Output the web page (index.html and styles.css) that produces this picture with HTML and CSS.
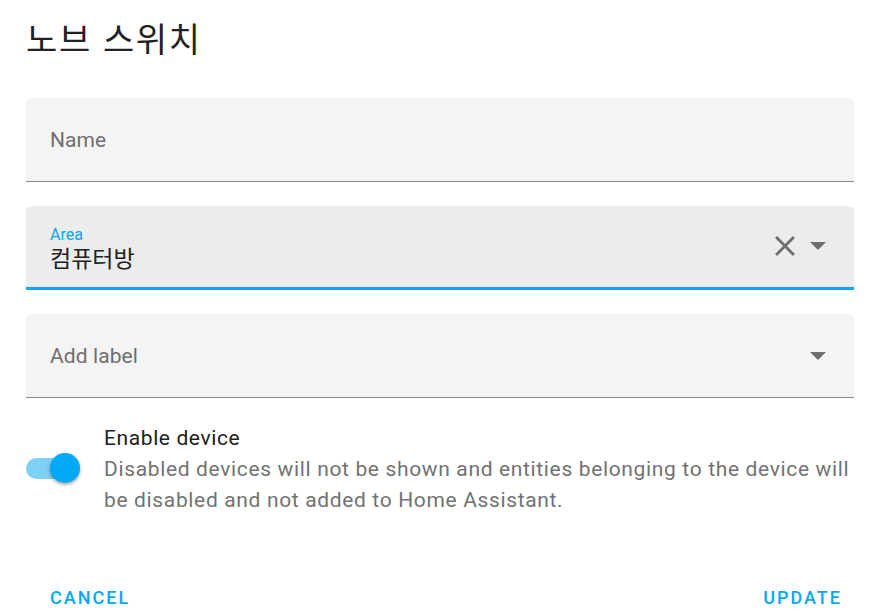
FILE: index.html
```html
<!DOCTYPE html>
<html lang="ko">
<head>
<meta charset="utf-8">
<link rel="stylesheet" href="styles.css">
</head>
<body>
<div class="dialog">
  <h1 class="title">노브 스위치</h1>
  <div class="fields">
    <div class="field">
      <span class="placeholder">Name</span>
    </div>
    <div class="field focused">
      <div class="stack">
        <span class="float-label">Area</span>
        <span class="value">컴퓨터방</span>
      </div>
      <div class="icons">
        <svg class="clear" width="34" height="34" viewBox="0 0 24 24"><path d="M19,6.41L17.59,5L12,10.59L6.41,5L5,6.41L10.59,12L5,17.59L6.41,19L12,13.41L17.59,19L19,17.59L13.41,12L19,6.41Z"/></svg>
        <svg class="arrow" width="16" height="8" viewBox="0 0 16 8"><path d="M0 0 L16 0 L8 8 Z"/></svg>
      </div>
    </div>
    <div class="field">
      <span class="placeholder">Add label</span>
      <div class="icons">
        <svg class="arrow" width="16" height="8" viewBox="0 0 16 8"><path d="M0 0 L16 0 L8 8 Z"/></svg>
      </div>
    </div>
  </div>
  <div class="toggle-row">
    <div class="switch">
      <div class="track"></div>
      <div class="knob"></div>
    </div>
    <div class="toggle-text">
      <div class="toggle-title">Enable device</div>
      <div class="toggle-desc">Disabled devices will not be shown and entities belonging to the device will be disabled and not added to Home Assistant.</div>
    </div>
  </div>
  <div class="actions">
    <button class="btn">Cancel</button>
    <button class="btn">Update</button>
  </div>
</div>
</body>
</html>
```
FILE: styles.css
```css
html, body {
  margin: 0;
  padding: 0;
  background: #ffffff;
}
body {
  font-family: Roboto, "Noto Sans CJK KR", sans-serif;
  width: 879px;
  height: 615px;
  overflow: hidden;
}
.dialog {
  padding: 0 25px 0 26px;
}
.title {
  margin: 0;
  padding-top: 14px;
  height: 98px;
  box-sizing: border-box;
  font-family: "Noto Sans CJK KR", Roboto, sans-serif;
  font-weight: 400;
  font-size: 34px;
  letter-spacing: 1.6px;
  line-height: 48px;
  color: #212121;
}
.fields {
  display: flex;
  flex-direction: column;
  gap: 24px;
}
.field {
  height: 84px;
  box-sizing: border-box;
  background: #f4f4f4;
  border-radius: 6px 6px 0 0;
  border-bottom: 1px solid #8a8a8a;
  display: flex;
  align-items: center;
  padding: 0 24px;
}
.field.focused {
  background: #ececec;
  border-bottom: 3px solid #03a9f4;
  padding-bottom: 2px;
}
.placeholder {
  font-size: 21px;
  color: #6f6f6f;
  letter-spacing: 0.1px;
}
.stack {
  display: flex;
  flex-direction: column;
  padding-top: 5px;
}
.float-label {
  font-size: 16px;
  color: #03a9f4;
  line-height: 17px;
}
.value {
  font-family: "Noto Sans CJK KR", Roboto, sans-serif;
  font-size: 23px;
  color: #212121;
  line-height: 28px;
}
.icons {
  margin-left: auto;
  display: flex;
  align-items: center;
  gap: 8px;
  padding-right: 4px;
}
.clear {
  fill: #6e6e6e;
}
.arrow {
  fill: #6e6e6e;
}
.toggle-row {
  display: flex;
  align-items: flex-start;
  margin-top: 24px;
}
.switch {
  position: relative;
  width: 78px;
  flex: none;
  height: 30px;
  margin-top: 31px;
}
.track {
  position: absolute;
  left: 0;
  top: 5px;
  width: 54px;
  height: 21px;
  border-radius: 11px;
  background: #7fd0f7;
}
.knob {
  position: absolute;
  left: 24px;
  top: 0;
  width: 30px;
  height: 30px;
  border-radius: 50%;
  background: #03a9f4;
  box-shadow: 0 2px 3px rgba(0,0,0,0.25), 0 1px 5px rgba(0,0,0,0.12);
}
.toggle-text {
  flex: 1;
}
.toggle-title {
  font-size: 21px;
  color: #212121;
  line-height: 30px;
  letter-spacing: 0.6px;
  padding-top: 1px;
}
.toggle-desc {
  font-size: 21px;
  color: #727272;
  line-height: 31px;
  letter-spacing: 0.65px;
  margin-top: 1px;
}
.actions {
  display: flex;
  justify-content: space-between;
  margin-top: 70px;
  padding: 0 12px 0 24px;
}
.btn {
  background: none;
  border: none;
  padding: 0;
  font-family: Roboto, sans-serif;
  font-weight: 500;
  font-size: 18px;
  letter-spacing: 2px;
  text-transform: uppercase;
  color: #03a9f4;
  line-height: 24px;
}
```
